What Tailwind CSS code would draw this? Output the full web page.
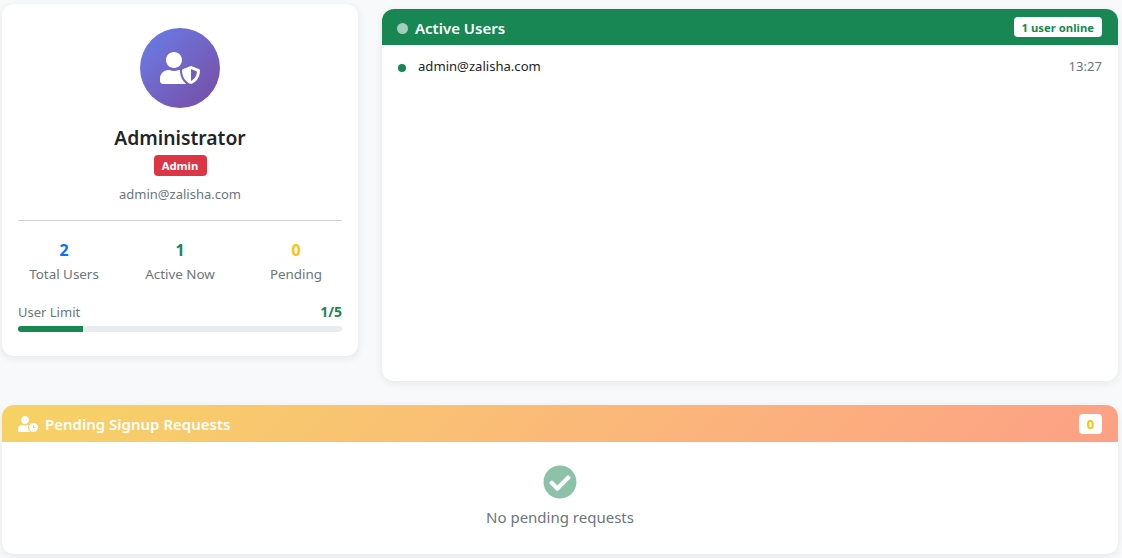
<!DOCTYPE html>
<html lang="en">
<head>
  <meta charset="UTF-8">
  <title>Admin Dashboard</title>
  <script src="https://cdn.jsdelivr.net/npm/@tailwindcss/browser@4"></script>
</head>
<body class="bg-[#f8f9fa] h-[558px] overflow-hidden font-['Noto_Sans',sans-serif] text-[#212529]">
  <div class="px-[2px] pr-1">

    <div class="grid grid-cols-[356px_736px] gap-x-6 items-start">
      <!-- Profile -->
      <div class="mt-1 h-[352px] bg-white rounded-xl shadow-[0_2px_8px_rgba(0,0,0,0.08)] p-4 pt-6">
        <div class="flex flex-col items-center">
          <div class="w-20 h-20 rounded-full bg-linear-135 from-[#667eea] to-[#764ba2] flex items-center justify-center">
            <svg class="w-10 h-8 fill-white" viewBox="0 0 640 512"><path d="M622.3 271.1l-115.2-45c-4.1-1.6-12.6-3.7-22.2 0l-115.2 45c-10.7 4.2-17.7 14-17.7 24.9 0 111.6 68.7 188.8 132.9 213.9 9.6 3.7 18 1.6 22.2 0C558.4 489.9 640 420.5 640 296c0-10.9-7-20.7-17.7-24.9zM496 462.4V273.3l95.5 37.3c-5.6 87.1-60.9 135.4-95.5 151.8zM224 256c70.7 0 128-57.3 128-128S294.7 0 224 0 96 57.3 96 128s57.3 128 128 128zm96 40c0-2.5.8-4.8 1.1-7.2-2.5-.1-4.9-.8-7.5-.8h-16.7c-22.2 10.2-46.9 16-72.9 16s-50.6-5.8-72.9-16h-16.7C60.2 288 0 348.2 0 422.4V464c0 26.5 21.5 48 48 48h352c6.8 0 13.3-1.5 19.2-4-54-42.9-99.2-116.7-99.2-212z"/></svg>
          </div>
          <h2 class="mt-[18px] text-[19.3px] leading-6 font-semibold">Administrator</h2>
          <span class="mt-[5px] h-[21px] w-[53px] text-center rounded bg-[#dc3545] text-white text-[11.3px] leading-[21px] font-bold">Admin</span>
          <p class="mt-2 text-[13px] leading-5 text-[#6c757d]">admin@zalisha.com</p>
        </div>
        <div class="mt-4 border-t border-[#cfd0d2]"></div>
        <div class="mt-[19px] -mx-3 grid grid-cols-3 text-center">
          <div>
            <div class="text-base leading-5 font-bold text-[#0d6efd]">2</div>
            <div class="mt-1 text-[13.4px] leading-5 text-[#6c757d]">Total Users</div>
          </div>
          <div>
            <div class="text-base leading-5 font-bold text-[#198754]">1</div>
            <div class="mt-1 text-[13.4px] leading-5 text-[#6c757d]">Active Now</div>
          </div>
          <div>
            <div class="text-base leading-5 font-bold text-[#ffc107]">0</div>
            <div class="mt-1 text-[13.4px] leading-5 text-[#6c757d]">Pending</div>
          </div>
        </div>
        <div class="mt-[18px] flex justify-between items-center text-[13px] leading-5">
          <span class="text-[#6c757d]">User Limit</span>
          <span class="text-sm font-bold text-[#198754]">1/5</span>
        </div>
        <div class="mt-1 h-1.5 rounded-full bg-[#e9ecef] overflow-hidden">
          <div class="h-full w-1/5 bg-[#198754]"></div>
        </div>
      </div>

      <!-- Active users -->
      <div class="mt-[9px] h-[372px] bg-white rounded-xl shadow-[0_2px_8px_rgba(0,0,0,0.08)] overflow-hidden">
        <div class="h-9 bg-[#198754] text-white flex items-center justify-between pl-[15px] pr-4">
          <div class="flex items-center gap-[7px]">
            <span class="w-[11px] h-[11px] mt-0.5 rounded-full bg-white/60"></span>
            <span class="mt-0.5 text-[15px] font-semibold">Active Users</span>
          </div>
          <span class="h-5 px-2 rounded bg-white text-[#198754] text-[11.3px] leading-[22px] font-bold">1 user online</span>
        </div>
        <div class="flex items-center justify-between pl-4 pr-4 h-11">
          <div class="flex items-center gap-3">
            <span class="w-2 h-2 rounded-full bg-[#198754] mt-0.5"></span>
            <span class="text-[13.1px]">admin@zalisha.com</span>
          </div>
          <span class="text-[13.1px] text-[#6c757d]">13:27</span>
        </div>
      </div>
    </div>

    <!-- Pending requests -->
    <div class="mt-6 h-[149px] w-[1116px] bg-white rounded-xl shadow-[0_2px_8px_rgba(0,0,0,0.08)] overflow-hidden">
      <div class="h-[37px] bg-linear-135 from-[#f6d365] to-[#fda085] text-white flex items-center justify-between pl-4 pr-4">
        <div class="flex items-center gap-2">
          <svg class="w-5 h-4 fill-white" viewBox="0 0 640 512"><path d="M496 224c-79.6 0-144 64.4-144 144s64.4 144 144 144 144-64.4 144-144-64.4-144-144-144zm64 150.3c0 5.3-4.4 9.7-9.7 9.7h-60.6c-5.3 0-9.7-4.4-9.7-9.7v-76.6c0-5.3 4.4-9.7 9.7-9.7h12.6c5.3 0 9.7 4.4 9.7 9.7V352h38.3c5.3 0 9.7 4.4 9.7 9.7v12.6zM320 368c0-27.8 6.7-54.1 18.2-77.5-8-1.5-16.2-2.5-24.6-2.5h-16.7c-22.2 10.2-46.9 16-72.9 16s-50.6-5.8-72.9-16h-16.7C60.2 288 0 348.2 0 422.4V464c0 26.5 21.5 48 48 48h347.1c-45.3-31.9-75.1-84.5-75.1-144zm-96-112c70.7 0 128-57.3 128-128S294.7 0 224 0 96 57.3 96 128s57.3 128 128 128z"/></svg>
          <span class="-ml-px mt-0.5 text-[15px] font-semibold">Pending Signup Requests</span>
        </div>
        <span class="h-5 w-[23px] text-center rounded bg-white text-[#ffc107] text-[13px] leading-5 font-bold">0</span>
      </div>
      <div class="flex flex-col items-center pt-[23px]">
        <svg class="w-[34px] h-[34px] fill-[#198754] opacity-50" viewBox="0 0 512 512"><path d="M504 256c0 136.967-111.033 248-248 248S8 392.967 8 256 119.033 8 256 8s248 111.033 248 248zM227.314 387.314l184-184c6.248-6.248 6.248-16.379 0-22.627l-22.627-22.627c-6.248-6.249-16.379-6.249-22.628 0L216 308.118l-70.059-70.059c-6.248-6.248-16.379-6.248-22.628 0l-22.627 22.627c-6.248 6.248-6.248 16.379 0 22.627l104 104c6.249 6.25 16.379 6.25 22.628.001z"/></svg>
        <p class="mt-1.5 text-[15px] leading-6 text-[#6c757d]">No pending requests</p>
      </div>
    </div>
  </div>
</body>
</html>
